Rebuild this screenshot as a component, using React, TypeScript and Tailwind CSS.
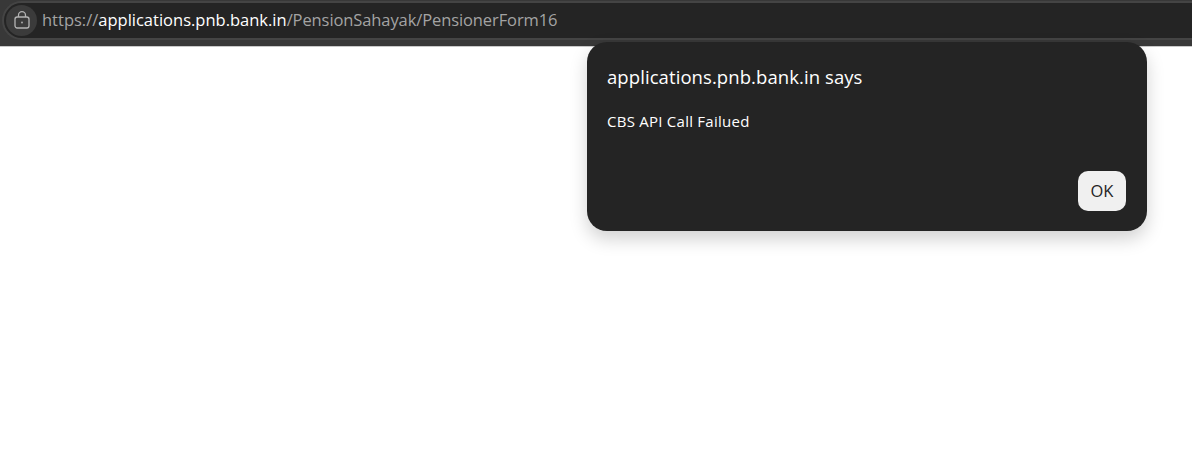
import React from "react";

export default function App() {
  return (
    <div className="relative h-[452px] w-[1192px] overflow-hidden bg-white font-['Open_Sans',sans-serif]">
      <header className="h-[47px] border-b border-[#c8c8c8] bg-[#383838] pl-[2px] pt-px">
        <div className="flex h-[39px] items-center rounded-l-full border-2 border-r-0 border-[#444444] bg-[#242424] pl-[2px]">
          <div className="flex h-[31px] w-[31px] items-center justify-center rounded-full bg-[#3b3b3b]">
            <svg className="-mt-px" width="16" height="18" viewBox="0 0 16 18" fill="none" stroke="#b4b4b4" strokeWidth="1.3">
              <rect x="1" y="6" width="14" height="11" rx="2.2" />
              <path d="M4.5 6V4.2a3.5 3.5 0 0 1 7 0V6" />
              <circle cx="8" cy="11.5" r="0.9" fill="#b4b4b4" stroke="none" />
            </svg>
          </div>
          <div className="ml-[5px] text-[16.5px] text-[#a3a3a3]">
            https://<span className="text-white">applications.pnb.bank.in</span>
            <span className="tracking-[-0.1px]">/PensionSahayak/PensionerForm16</span>
          </div>
        </div>
      </header>
      <div
        role="dialog"
        className="absolute left-[587px] top-[42px] flex h-[189px] w-[560px] flex-col rounded-[20px] bg-[#242424] pb-5 pl-5 pr-[21px] pt-[21px] text-white shadow-[0_8px_18px_rgba(0,0,0,0.18)]"
      >
        <div className="text-[18.5px] leading-[28px] tracking-[0.08px]">applications.pnb.bank.in says</div>
        <div className="mt-5 text-[15px] leading-[20px] tracking-[0.25px]">CBS API Call Failued</div>
        <div className="mt-auto flex justify-end">
          <button className="h-10 w-12 rounded-[10px] bg-[#f0f0f0] text-[16.5px] text-[#242424]">OK</button>
        </div>
      </div>
    </div>
  );
}
